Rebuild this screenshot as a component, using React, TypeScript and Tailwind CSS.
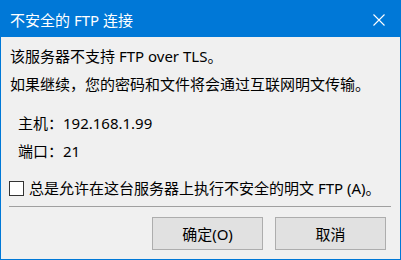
import React from "react";

const font = {
  fontFamily: '"Segoe UI", "Noto Sans", "Noto Sans CJK SC", sans-serif',
};

export default function App() {
  return (
    <div
      style={font}
      className="w-[401px] h-[260px] border border-[#0078d7] bg-[#f0f0f0] flex flex-col text-[15px] text-black overflow-hidden"
    >
      {/* Title bar */}
      <div className="h-[36px] bg-[#0078d7] flex items-center justify-between pl-[9px] pr-[15px] text-white shrink-0">
        <span className="leading-[20px] mt-[1px]">不安全的 FTP 连接</span>
        <svg width="12" height="12" viewBox="0 0 12 12" className="mt-[1px]">
          <path d="M0.5 0.5 L11.5 11.5 M11.5 0.5 L0.5 11.5" stroke="white" strokeWidth="1.1" fill="none" />
        </svg>
      </div>

      {/* Body */}
      <div className="flex flex-col px-2 pt-[9px]">
        <div className="leading-[20px] ml-px">该服务器不支持 FTP over TLS。</div>
        <div className="leading-[20px] ml-px mt-[8px]">如果继续，您的密码和文件将会通过互联网明文传输。</div>
        <div className="leading-[20px] ml-[9px] mt-[19px]">主机：192.168.1.99</div>
        <div className="leading-[20px] ml-[9px] mt-[8px]">端口：21</div>

        <label className="flex items-center mt-[17px] h-[20px]">
          <span className="w-[15px] h-[15px] border border-[#333333] bg-white shrink-0" />
          <span className="leading-[20px] ml-[5px]">总是允许在这台服务器上执行不安全的明文 FTP (A)。</span>
        </label>

        <div className="h-px bg-[#a0a0a0] mt-[8px] mr-px" />

        <div className="flex justify-end gap-[12px] mt-[10px] pr-[6px]">
          <button className="w-[111px] h-[33px] bg-[#e1e1e1] border border-[#adadad] leading-[20px]">
            确定(O)
          </button>
          <button className="w-[111px] h-[33px] bg-[#e1e1e1] border border-[#adadad] leading-[20px]">
            取消
          </button>
        </div>
      </div>
    </div>
  );
}
